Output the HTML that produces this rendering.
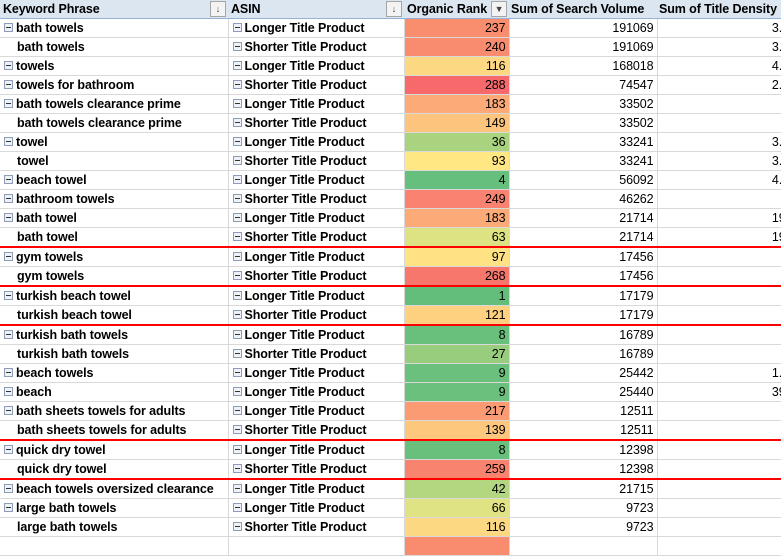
<!DOCTYPE html>
<html><head><meta charset="utf-8"><style>
html,body{margin:0;padding:0;width:781px;height:541px;overflow:hidden;background:#fff;}
table{border-collapse:collapse;table-layout:fixed;width:792px;font-family:"Liberation Sans",sans-serif;font-size:12.5px;letter-spacing:-0.1px;color:#000;position:absolute;left:0;top:0;}
td{height:18px;padding:0;border-bottom:1px solid #d9d9d9;border-right:1px solid #d9d9d9;white-space:nowrap;overflow:hidden;line-height:18px;}
thead td{background:#dce6f1;font-weight:bold;height:17px;border-bottom:1px solid #95b3d7;border-right:none;position:relative;}
td.k{font-weight:bold;padding-left:17px;}
td.k.g{padding-left:4px;border-top:1px solid #95b3d7;}
td.a{font-weight:bold;padding-left:4px;}
td.r{text-align:right;padding-right:3px;}
td.n{text-align:right;padding-right:3px;}
td.d{text-align:right;padding-right:3px;border-right:none;}
.m{display:inline-block;width:7px;height:7px;border:1px solid #8d9db5;background:#eef2f8;position:relative;vertical-align:0px;margin-right:3px;}
.m:after{content:"";position:absolute;left:1px;right:1px;top:3px;height:1px;background:#333;}
tr.red td{border-bottom:2px solid #f00;}
.f{position:absolute;top:1px;width:14px;height:14px;border:1px solid #a6a6a6;background:#f3f3f3;font-size:9px;line-height:14px;text-align:center;color:#444;}
.o{color:#f0a030;}
</style></head><body>
<table>
<colgroup><col style="width:228px"><col style="width:176px"><col style="width:105px"><col style="width:148px"><col style="width:135px"></colgroup>
<thead><tr><td style="padding-left:3px">Keyword Phrase<span class="f" style="left:210px">↓</span></td><td style="padding-left:3px">ASIN<span class="f" style="left:158px">↓</span></td><td style="padding-left:3px">Organic Rank<span class="f" style="left:87px">▼</span></td><td style="padding-left:2px">Sum of Search Volume</td><td style="padding-left:2px">Sum of Title Density</td></tr></thead>
<tbody>
<tr><td class="k g"><span class="m"></span>bath towels</td><td class="a"><span class="m"></span>Longer Title Product</td><td class="r" style="background:#f98e6f">237</td><td class="n">191069</td><td class="d">3.5</td></tr>
<tr><td class="k">bath towels</td><td class="a"><span class="m"></span>Shorter Title Product</td><td class="r" style="background:#f98c6f">240</td><td class="n">191069</td><td class="d">3.5</td></tr>
<tr><td class="k g"><span class="m"></span>towels</td><td class="a"><span class="m"></span>Longer Title Product</td><td class="r" style="background:#fdd882">116</td><td class="n">168018</td><td class="d">4.5</td></tr>
<tr><td class="k g"><span class="m"></span>towels for bathroom</td><td class="a"><span class="m"></span>Shorter Title Product</td><td class="r" style="background:#f8696b">288</td><td class="n">74547</td><td class="d">2.5</td></tr>
<tr><td class="k g"><span class="m"></span>bath towels clearance prime</td><td class="a"><span class="m"></span>Longer Title Product</td><td class="r" style="background:#fcaa77">183</td><td class="n">33502</td><td class="d o">6 </td></tr>
<tr><td class="k">bath towels clearance prime</td><td class="a"><span class="m"></span>Shorter Title Product</td><td class="r" style="background:#fdc47d">149</td><td class="n">33502</td><td class="d o">6 </td></tr>
<tr><td class="k g"><span class="m"></span>towel</td><td class="a"><span class="m"></span>Longer Title Product</td><td class="r" style="background:#a9d37f">36</td><td class="n">33241</td><td class="d">3.5</td></tr>
<tr><td class="k">towel</td><td class="a"><span class="m"></span>Shorter Title Product</td><td class="r" style="background:#ffe784">93</td><td class="n">33241</td><td class="d">3.5</td></tr>
<tr><td class="k g"><span class="m"></span>beach towel</td><td class="a"><span class="m"></span>Longer Title Product</td><td class="r" style="background:#66bf7c">4</td><td class="n">56092</td><td class="d">4.5</td></tr>
<tr><td class="k g"><span class="m"></span>bathroom towels</td><td class="a"><span class="m"></span>Shorter Title Product</td><td class="r" style="background:#f98370">249</td><td class="n">46262</td><td class="d">- </td></tr>
<tr><td class="k g"><span class="m"></span>bath towel</td><td class="a"><span class="m"></span>Longer Title Product</td><td class="r" style="background:#fcaa77">183</td><td class="n">21714</td><td class="d">19.</td></tr>
<tr class="red"><td class="k">bath towel</td><td class="a"><span class="m"></span>Shorter Title Product</td><td class="r" style="background:#dde383">63</td><td class="n">21714</td><td class="d">19.</td></tr>
<tr><td class="k g"><span class="m"></span>gym towels</td><td class="a"><span class="m"></span>Longer Title Product</td><td class="r" style="background:#ffe283">97</td><td class="n">17456</td><td class="d o">3 </td></tr>
<tr class="red"><td class="k">gym towels</td><td class="a"><span class="m"></span>Shorter Title Product</td><td class="r" style="background:#f8776d">268</td><td class="n">17456</td><td class="d o">3 </td></tr>
<tr><td class="k g"><span class="m"></span>turkish beach towel</td><td class="a"><span class="m"></span>Longer Title Product</td><td class="r" style="background:#63be7b">1</td><td class="n">17179</td><td class="d">3 </td></tr>
<tr class="red"><td class="k">turkish beach towel</td><td class="a"><span class="m"></span>Shorter Title Product</td><td class="r" style="background:#fdd17f">121</td><td class="n">17179</td><td class="d">3 </td></tr>
<tr><td class="k g"><span class="m"></span>turkish bath towels</td><td class="a"><span class="m"></span>Longer Title Product</td><td class="r" style="background:#69c07c">8</td><td class="n">16789</td><td class="d o">- </td></tr>
<tr><td class="k">turkish bath towels</td><td class="a"><span class="m"></span>Shorter Title Product</td><td class="r" style="background:#98cd7e">27</td><td class="n">16789</td><td class="d o">- </td></tr>
<tr><td class="k g"><span class="m"></span>beach towels</td><td class="a"><span class="m"></span>Longer Title Product</td><td class="r" style="background:#6ac07c">9</td><td class="n">25442</td><td class="d">1.5</td></tr>
<tr><td class="k g"><span class="m"></span>beach</td><td class="a"><span class="m"></span>Longer Title Product</td><td class="r" style="background:#6ac07c">9</td><td class="n">25440</td><td class="d">39.</td></tr>
<tr><td class="k g"><span class="m"></span>bath sheets towels for adults</td><td class="a"><span class="m"></span>Longer Title Product</td><td class="r" style="background:#fa9b73">217</td><td class="n">12511</td><td class="d">- </td></tr>
<tr class="red"><td class="k">bath sheets towels for adults</td><td class="a"><span class="m"></span>Shorter Title Product</td><td class="r" style="background:#fdc77e">139</td><td class="n">12511</td><td class="d">- </td></tr>
<tr><td class="k g"><span class="m"></span>quick dry towel</td><td class="a"><span class="m"></span>Longer Title Product</td><td class="r" style="background:#69c07c">8</td><td class="n">12398</td><td class="d o">- </td></tr>
<tr class="red"><td class="k">quick dry towel</td><td class="a"><span class="m"></span>Shorter Title Product</td><td class="r" style="background:#f8836f">259</td><td class="n">12398</td><td class="d o">- </td></tr>
<tr><td class="k g"><span class="m"></span>beach towels oversized clearance</td><td class="a"><span class="m"></span>Longer Title Product</td><td class="r" style="background:#b3d680">42</td><td class="n">21715</td><td class="d o">- </td></tr>
<tr><td class="k g"><span class="m"></span>large bath towels</td><td class="a"><span class="m"></span>Longer Title Product</td><td class="r" style="background:#e0e383">66</td><td class="n">9723</td><td class="d o">- </td></tr>
<tr><td class="k">large bath towels</td><td class="a"><span class="m"></span>Shorter Title Product</td><td class="r" style="background:#fdd882">116</td><td class="n">9723</td><td class="d o">- </td></tr>
<tr><td class="k g"></td><td class="a"></td><td class="r" style="background:#f98b6f"></td><td class="n"></td><td class="d"></td></tr>
</tbody></table>
</body></html>
